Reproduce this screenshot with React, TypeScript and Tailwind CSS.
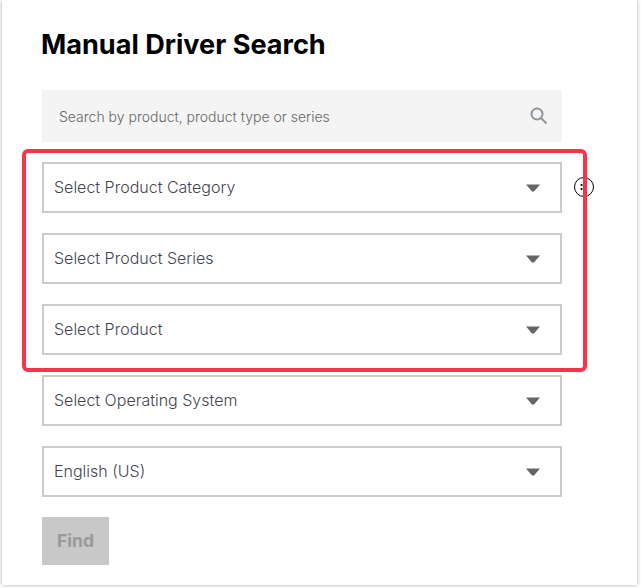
const fields = [
  "Select Product Category",
  "Select Product Series",
  "Select Product",
  "Select Operating System",
  "English (US)",
];

function Caret() {
  return (
    <svg width="14" height="8" viewBox="0 0 14 8" className="shrink-0">
      <path d="M0 0.5h14L8 7.5H6z" fill="#666666" />
    </svg>
  );
}

function SelectField({ label }: { label: string }) {
  return (
    <div className="flex h-[51px] items-center justify-between border-2 border-[#cccccc] bg-white pl-[10px] pr-[20px]">
      <span className="pb-[2px] text-[16px] font-light text-[#454552]">{label}</span>
      <Caret />
    </div>
  );
}

export default function App() {
  return (
    <div className="h-[588px] w-[642px] overflow-hidden bg-white pl-[2px] font-['Inter',sans-serif]">
      <div className="relative h-[585px] w-[635px] bg-white pl-[40px] pr-[75px] pt-[28px] shadow-[0_0_4px_rgba(0,0,0,0.35)]">
        <h1 className="mb-[28px] ml-[-1px] text-[27.1px] font-bold leading-[34px] text-black">
          Manual Driver Search
        </h1>

        <div className="flex h-[52px] items-center justify-between bg-[#f4f4f4] pl-[17px] pr-[14px]">
          <span className="text-[14px] font-light text-[#666666]">Search by product, product type or series</span>
          <svg width="18" height="18" viewBox="0 0 18 18" fill="none" stroke="#8f9499" strokeWidth="2">
            <circle cx="7" cy="7" r="5.5" />
            <path d="M11 11l5.5 5.5" />
          </svg>
        </div>

        <div className="mt-[20px] flex flex-col gap-[20px]">
          {fields.map((label) => (
            <SelectField key={label} label={label} />
          ))}
        </div>

        <button className="mt-[20px] flex h-[48px] w-[67px] items-center justify-center bg-[#c8c8c8] pt-[1px] text-[17.5px] font-bold text-[#999999]">
          Find
        </button>

        {/* Info icon partly under the highlight */}
        <div className="absolute left-[572px] top-[177px] flex h-[20px] w-[20px] items-center justify-center rounded-full border-[1.5px] border-black pb-[2px] pr-[5px] text-[12px] font-bold leading-none text-black">
          :
        </div>

        {/* Red highlight drawn over the first three selects */}
        <div className="pointer-events-none absolute left-[20px] top-[149px] h-[223px] w-[565px] rounded-[6px] border-[4px] border-[#f93448]" />
      </div>
    </div>
  );
}
